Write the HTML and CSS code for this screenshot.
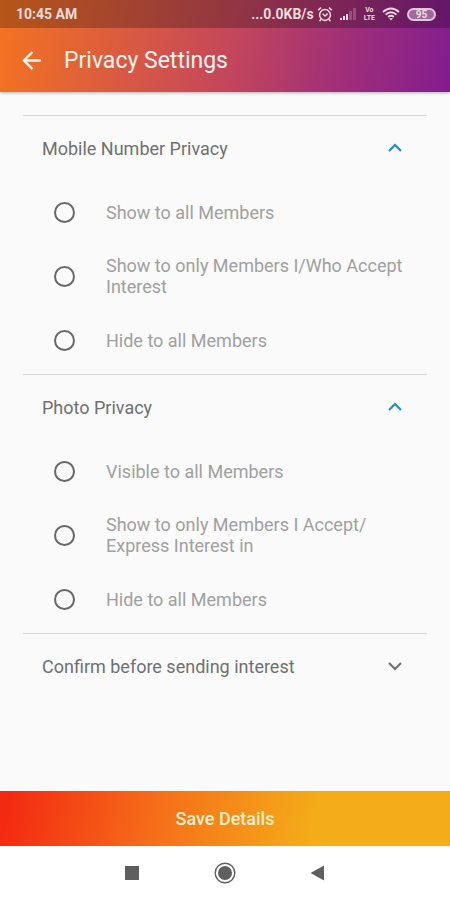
FILE: index.html
```html
<!DOCTYPE html>
<html lang="en">
<head>
<meta charset="utf-8">
<meta name="viewport" content="width=device-width, initial-scale=1">
<title>Privacy Settings</title>
<link rel="stylesheet" href="styles.css">
</head>
<body>
<div class="screen">
  <header class="top">
    <div class="status">
      <span class="time">10:45 AM</span>
      <div class="status-icons">
        <div class="speed">
          <span>...0.0KB/s</span>
          <svg width="16" height="16" viewBox="0 0 16 16" fill="none" stroke="currentColor" stroke-width="1.5" aria-hidden="true"><circle cx="8" cy="9" r="5.4"/><path d="M1.2 4.2 4 1.6M14.8 4.2 12 1.6M5.6 7.8 8 10l2.6-2.4M4 13.4l-1.4 1.8M12 13.4l1.4 1.8"/></svg>
        </div>
        <svg width="17" height="14" viewBox="0 0 17 14" fill="currentColor" aria-hidden="true"><path d="M0 11h2v2H0zM3 9h2v4H3zM6 7h2v6H6z"/><path opacity=".25" d="M9 4h3v9H9zM13 1h3v12h-3z"/></svg>
        <span class="volte"><span>Vo</span><span>LTE</span></span>
        <svg width="18" height="14" viewBox="0 0 18 14" fill="none" stroke="currentColor" stroke-width="1.9" aria-hidden="true"><path d="M1 5Q9-2 17 5M3.6 7.6Q9 3 14.4 7.6M6.2 10Q9 7.6 11.8 10"/><path d="M7 11.2h4L9 13.5z" fill="currentColor" stroke="none"/></svg>
        <span class="battery">95</span>
      </div>
    </div>
    <div class="appbar">
      <button class="back" type="button" aria-label="Back">
        <svg width="20" height="20" viewBox="0 0 20 20" fill="none" stroke="currentColor" stroke-width="2.4" aria-hidden="true"><path d="M19 10.5H2.8M10.5 2 2 10.5l8.5 8.5"/></svg>
      </button>
      <h1>Privacy Settings</h1>
    </div>
  </header>

  <main class="content">
    <details class="group" open>
      <summary>Mobile Number Privacy
        <svg class="chevron" width="16" height="10" viewBox="0 0 16 10" fill="none" stroke="currentColor" stroke-width="2.2" aria-hidden="true"><path d="m2 2 6 6 6-6"/></svg>
      </summary>
      <label class="option"><input type="radio" name="mobile"><span>Show to all Members</span></label>
      <label class="option"><input type="radio" name="mobile"><span>Show to only Members I/Who Accept Interest</span></label>
      <label class="option"><input type="radio" name="mobile"><span>Hide to all Members</span></label>
    </details>
    <details class="group" open>
      <summary>Photo Privacy
        <svg class="chevron" width="16" height="10" viewBox="0 0 16 10" fill="none" stroke="currentColor" stroke-width="2.2" aria-hidden="true"><path d="m2 2 6 6 6-6"/></svg>
      </summary>
      <label class="option"><input type="radio" name="photo"><span>Visible to all Members</span></label>
      <label class="option"><input type="radio" name="photo"><span>Show to only Members I Accept/<wbr>Express Interest in</span></label>
      <label class="option"><input type="radio" name="photo"><span>Hide to all Members</span></label>
    </details>
    <details class="group">
      <summary>Confirm before sending interest
        <svg class="chevron" width="16" height="10" viewBox="0 0 16 10" fill="none" stroke="currentColor" stroke-width="2.2" aria-hidden="true"><path d="m2 2 6 6 6-6"/></svg>
      </summary>
    </details>
  </main>

  <button class="save" type="button">Save Details</button>

  <nav class="navbar" aria-label="System">
    <button type="button" aria-label="Recent apps"><svg width="22" height="22" viewBox="0 0 22 22" aria-hidden="true"><path d="M4 4h14v14H4z" fill="#5f5f5f"/></svg></button>
    <button type="button" aria-label="Home"><svg width="22" height="22" viewBox="0 0 22 22" aria-hidden="true"><circle cx="11" cy="11" r="9.8" fill="none" stroke="#5f5f5f" stroke-width="1.4"/><circle cx="11" cy="11" r="7" fill="#5f5f5f"/></svg></button>
    <button type="button" aria-label="Go back"><svg width="22" height="22" viewBox="0 0 22 22" aria-hidden="true"><path d="M17 3.5v15L3.5 11z" fill="#5f5f5f"/></svg></button>
  </nav>
</div>
</body>
</html>
```
FILE: styles.css
```css
* {
  box-sizing: border-box;
}

body {
  margin: 0;
  background: #fafafa;
  color: #707070;
  font-family: Roboto, "Liberation Sans", sans-serif;
}

button {
  padding: 0;
  border: 0;
  background: none;
  color: inherit;
  font: inherit;
}

svg {
  display: block;
  flex: none;
}

.screen {
  display: flex;
  flex-direction: column;
  min-height: 100vh;
}

.top {
  background: linear-gradient(100deg, #f47320 0%, #c5485a 50%, #a02f78 76%, #821d90 100%);
  box-shadow: 0 1px 3px rgba(0, 0, 0, 0.3);
  color: #fff3ec;
}

.status {
  display: flex;
  align-items: center;
  justify-content: space-between;
  height: 28px;
  padding: 0 14px 0 16px;
  background: rgba(0, 0, 0, 0.25);
  color: #f0dcdc;
  font-size: 14px;
  font-weight: 700;
}

.status-icons {
  display: flex;
  align-items: center;
  gap: 7px;
}

.speed {
  display: flex;
  align-items: center;
  gap: 3px;
}

.volte {
  display: grid;
  font-size: 7px;
  line-height: 8px;
  text-align: center;
}

.battery {
  width: 29px;
  height: 13px;
  border: 2px solid #e0c8e0;
  border-radius: 7px;
  background: rgba(255, 255, 255, 0.35);
  font-size: 10px;
  line-height: 9px;
  text-align: center;
}

.appbar {
  display: flex;
  align-items: center;
  gap: 22px;
  height: 64px;
  padding: 0 22px;
}

h1 {
  margin: 0;
  font-size: 23px;
  font-weight: 400;
}

.content {
  flex: 1;
  padding: 23px 23px 0;
}

.group {
  padding-bottom: 2px;
  border-top: 1px solid #d6d6d6;
}

summary {
  display: flex;
  align-items: center;
  justify-content: space-between;
  height: 64px;
  padding: 0 24px 0 19px;
  font-size: 18px;
  list-style: none;
}

.group[open] .chevron {
  color: #1b8fc8;
  transform: rotate(180deg);
}

.option {
  display: flex;
  align-items: center;
  gap: 31px;
  min-height: 64px;
  padding: 0 12px 0 31px;
  color: #a0a0a0;
  font-size: 18px;
  line-height: 21px;
}

.option input {
  flex: none;
  width: 21px;
  height: 21px;
  margin: 0;
  border: 2px solid #686868;
  border-radius: 50%;
  appearance: none;
}

.option input:checked {
  background: radial-gradient(#686868 45%, transparent 50%);
}

.save {
  height: 55px;
  background: linear-gradient(100deg, #f32a12 2%, #f57019 36%, #f4ad18 70%);
  color: #fff0d0;
  font-size: 18px;
  font-weight: 500;
}

.navbar {
  display: flex;
  align-items: center;
  justify-content: center;
  gap: 71px;
  height: 54px;
  background: #fff;
}
```
